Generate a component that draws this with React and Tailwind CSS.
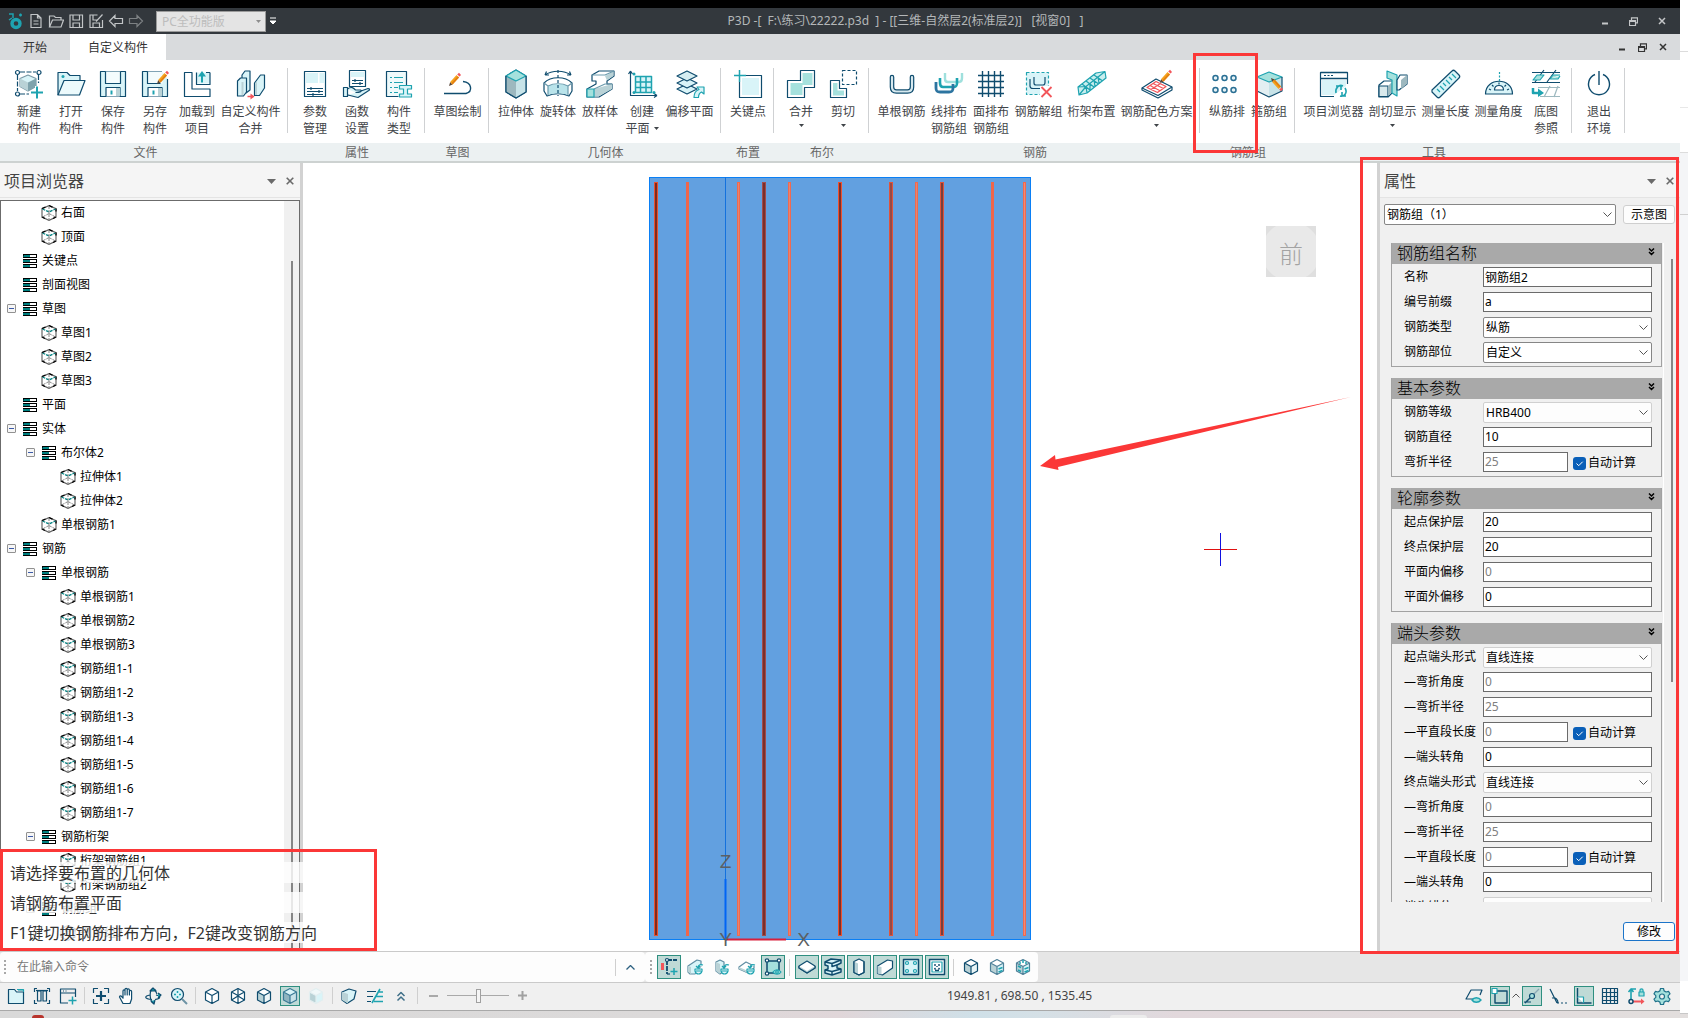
import React from "react";

const N = "#0f4c6e";
const T = "#1ea3b0";
const L = "#d9f4f8";
const M = "#a5e1dd";
const G = "#b9d2d6";

function Svg({ s = 32, children, className = "" }) {
  return (
    <svg
      width={s}
      height={s}
      viewBox={`0 0 ${s} ${s}`}
      fill="none"
      stroke={N}
      strokeWidth="1.2"
      strokeLinejoin="round"
      className={`shrink-0 ${className}`}
      aria-hidden="true"
    >
      {children}
    </svg>
  );
}

/* Pencil with its tip at x,y; points to lower left, or to upper left when flipped */
function Pencil({ x, y, flip = false }) {
  return (
    <g transform={`translate(${x} ${y})${flip ? " scale(1 -1)" : ""}`} stroke="none">
      <path d="M0 0 L1.2 -4 L3.6 -1.6z" fill="#5a4638" />
      <path d="M1.2 -4 L7.5 -11 L10 -8.6 L3.6 -1.6z" fill="#f6a21b" />
      <path d="M2.4 -2.8 L8.8 -9.8 L10 -8.6 L3.6 -1.6z" fill="#e27f12" />
      <path d="M8.2 -11.6 L10 -13.2 L12 -11 L10.6 -9.4z" fill="#f2555a" />
    </g>
  );
}

const ribbonIcons = {
  newPart: (
    <Svg>
      <path d="M4.5 7v16M7 4h16M25.5 7v8M7 26h9" strokeDasharray="5 1.5" />
      <circle cx="4.5" cy="4.5" r="2" fill="#fff" />
      <circle cx="26" cy="4.5" r="2" fill="#fff" />
      <circle cx="4.5" cy="26" r="2" fill="#fff" />
      <path d="M15 7l8 3.5v8L15 23l-8-4.500v-8z" fill={L} stroke="#7a99a6" />
      <path d="M15 14.500v8.500l-8-4.500v-8z" fill={G} stroke="none" />
      <path d="M15 14.500v8.500l8-4.500v-8z" fill="#7fa3ac" stroke="none" />
      <path d="M24 18v12M18 24h12" stroke="#fff" strokeWidth="4" />
      <path d="M24 18.500v12M18 24.500h12" stroke={T} strokeWidth="2" />
    </Svg>
  ),
  open: (
    <Svg>
      <path d="M3 27V4.500h9l3 3h10V13" fill={L} />
      <path d="M9 12.500h21L24.500 27H3z" fill="#ecfafc" />
      <circle cx="8" cy="8.500" r="1.500" fill={T} stroke="none" />
    </Svg>
  ),
  save: (
    <Svg>
      <path d="M3.500 3.500h25v25h-25z" fill={L} />
      <path d="M8.500 3.500v12h15v-12" fill="#f4fcfd" />
      <path d="M9 28.500v-9h14v9" fill="#fff" />
      <path d="M19 20h4v8h-4z" fill={G} stroke="none" />
      <path d="M14.500 22.500v4" stroke={T} strokeWidth="2" />
    </Svg>
  ),
  saveAs: (
    <Svg>
      <path d="M23 3.500H3.500v25h25V11" fill={L} />
      <path d="M8.500 3.500v12h15v-12" fill="#f4fcfd" stroke="none" />
      <path d="M8.500 3.500v12h13" />
      <path d="M9 28.500v-9h14v9" fill="#fff" />
      <path d="M19 20h4v8h-4z" fill={G} stroke="none" />
      <path d="M14.500 22.500v4" stroke={T} strokeWidth="2" />
      <Pencil x={18} y={16} />
    </Svg>
  ),
  load: (
    <Svg>
      <path d="M11 4.500H3.500v24h25.500V21h-18z" fill="#fff" />
      <path d="M21 4.500h-5.500v11h13.500V4.500" fill={L} stroke="none" />
      <path d="M15.500 4.500v12h13.500v-12M25 4.500h4" />
      <path d="M21 14.500V6" stroke={T} strokeWidth="2" />
      <path d="M17 8.500l4-5.500 4 5.500z" fill={T} stroke="none" />
    </Svg>
  ),
  merge: (
    <Svg>
      <path d="M7 7l3-4h5v19l-4 3-4-3z" fill={L} />
      <path d="M2.500 13l3-3h6v14l-3 4h-6z" fill={L} />
      <path d="M7.500 14v13" stroke={G} strokeWidth="2" />
      <path d="M19.500 15l6-8h4v13l-5 7.500h-5z" fill={L} />
      <path d="M20 27V15.500l2-2V27z" fill={G} stroke="none" />
      <path d="M12.500 28.500h6" stroke="#f2555a" strokeWidth="1.500" />
      <path d="M15.500 25.500l4 3-4 3z" fill="#f2555a" stroke="none" />
    </Svg>
  ),
  params: (
    <Svg>
      <rect x="5.500" y="3.500" width="21" height="25" fill="#fff" />
      <path d="M7 5h12v10H7zM20.500 5h5v10h-5z" fill={L} stroke="none" />
      <path d="M8 20.500h16M8 23.500h16M8 26.500h16M12 19v3M20 22v3M14 25v3" />
    </Svg>
  ),
  func: (
    <Svg>
      <rect x="8.500" y="2.500" width="16" height="16" fill="#fff" />
      <path d="M10 4h13v5H10z" fill={L} stroke="none" />
      <path d="M11 12.500h11M11 15.500h11M14 11v3M19 14v3" />
      <path d="M2.500 19.500h4v9h-4zM6.500 21c4-3 6-1 8 1h5c2 1 0 2.500-5 2.500M20 23l7-2.500c2 0 2 1.500 0 2.500l-10 6.500-10-2.500" fill={L} />
    </Svg>
  ),
  type: (
    <Svg>
      <path d="M15.500 28.500h-12v-25h20v14" fill="#eefafb" />
      <path d="M7 9.500h2M11 9.500h9M7 14.500h2M11 14.500h9M7 19.500h2M11 19.500h4M7 24.500h2M11 24.500h4" stroke={T} />
      <path d="M16.500 17.500h12v3.500h-4v5h4v3h-12v-3h4v-5h-4z" fill={L} stroke={T} />
    </Svg>
  ),
  sketch: (
    <Svg>
      <path d="M2 25.500h22c7-2 6-11-3-12" strokeWidth="1.400" />
      <Pencil x={7} y={18} />
    </Svg>
  ),
  extrude: (
    <Svg>
      <path d="M16 2l10 6v16l-10 6-10-6V8z" fill={L} />
      <path d="M16 13v17l-10-6V8z" fill="#9db8bf" stroke="none" />
      <path d="M16 13v17l10-6V8z" fill="#c7e3e8" stroke="none" />
      <path d="M16 2l10 6-10 5L6 8z" fill={M} stroke={T} />
      <path d="M6 8v16l10 6 10-6V8" />
    </Svg>
  ),
  revolve: (
    <Svg>
      <path d="M3 7c7-5 19-5 26 0M3 7l1.500-3.500M3 7l4 0M29 7l-1.500-3.500M29 7h-4" />
      <path d="M2 15c7-7 21-7 28 0v8l-3 5c-7-3-15-3-22 0l-3-5z" fill="#fff" />
      <path d="M6 18c6-3 14-3 20 0v9c-6-2-14-2-20 0z" fill="#b9e3ea" stroke="none" />
      <path d="M2 15l4 3v9.500M30 15l-4 3v9.500M6 18c6-3 14-3 20 0" stroke="#6c9bad" />
      <path d="M16 2v26" strokeDasharray="3 2" />
    </Svg>
  ),
  loft: (
    <Svg>
      <path d="M8 7l7-4h15v5l-7 5v3h5v5L15 29H3v-8l9-5v-3H8z" fill="#fff" />
      <path d="M21 8l8.500-4.500V8L23 12.500zM10 21l18-5v5L14.500 28.500H10z" fill={G} stroke="none" />
      <path d="M8 7h13l9-4M10 21l11-5h7" stroke="#6c9bad" />
      <rect x="3" y="21" width="7" height="8" fill={M} stroke={T} />
    </Svg>
  ),
  plane: (
    <Svg>
      <path d="M4.500 3v24.500H31M4.500 3l-2 3M4.500 3l2 3M31 27.500l-3-2M31 27.500l-3 2" />
      <rect x="9.500" y="8.500" width="16" height="16" fill={L} stroke={T} strokeWidth="1.500" />
      <path d="M14.500 8v16M20 8v16M9 14h16M9 19.500h16" stroke={T} strokeWidth="1.500" />
      <g fill={T} stroke="none">
        <circle cx="8" cy="6" r="1.500" />
        <circle cx="28" cy="24.500" r="1.500" />
        <circle cx="8" cy="24.500" r="1.500" />
      </g>
    </Svg>
  ),
  offset: (
    <Svg>
      <path d="M13 16l10 5-10 5-10-5z" fill={L} />
      <path d="M13 10l10 5-10 5-10-5z" fill={L} />
      <path d="M13 3l10 5-10 5-10-5z" fill="#d6eef2" />
      <path d="M20 29.500c0-4 2-7 5-8l-2-2.500h7v7l-2.500-2c-2 1-3 3-3 5.500z" fill={L} stroke={T} />
    </Svg>
  ),
  keypoint: (
    <Svg>
      <path d="M7.500 14v15.500h22v-22H13" />
      <path d="M10 10h17v17H10z" fill={L} stroke="none" />
      <path d="M7.500 2v12M2 7.500h12" stroke={T} strokeWidth="1.500" />
    </Svg>
  ),
  union: (
    <Svg>
      <path d="M15.500 2.500h14v17h-10v10h-17v-17h13z" />
      <path d="M17.500 5h10v12h-10v10h-12V15h12z" fill={M} stroke="none" />
    </Svg>
  ),
  subtract: (
    <Svg>
      <rect x="15.500" y="2.500" width="14" height="14" strokeDasharray="3 2" />
      <path d="M3.500 12.500h9v8h7v9h-16z" />
      <path d="M6 15h4.500v7.500H17v5H6z" fill={M} stroke="none" />
    </Svg>
  ),
  single: (
    <Svg>
      <path d="M6 9v10c0 3 1.500 4.500 4.500 4.500h11c3 0 4.500-1.500 4.500-4.500V9" stroke={N} strokeWidth="4.600" strokeLinecap="round" />
      <path d="M6 9v10c0 3 1.500 4.500 4.500 4.500h11c3 0 4.500-1.500 4.500-4.500V9" stroke="#d7e9ef" strokeWidth="2.200" strokeLinecap="round" />
    </Svg>
  ),
  lineRow: (
    <Svg>
      <path d="M12 5v6c0 2 1 3 3 3h11c2 0 3-1 3-4V5" stroke="#9fe0dd" strokeWidth="2.400" />
      <path d="M7 10v5c0 3 1 4 3 4h10c3 0 4-1 4-4v-5" stroke={T} strokeWidth="2.600" />
      <path d="M3 14v6c0 3 1 4 4 4h9c3 0 4-1 4-4v-4" stroke="#2c74a0" strokeWidth="2.800" />
    </Svg>
  ),
  gridRow: (
    <Svg>
      <path d="M7.500 3v26M13.500 3v26M19.500 3v26M25.500 3v26M3 7.500h26M3 13.500h26M3 19.500h26M3 25.500h26" strokeWidth="1.400" />
    </Svg>
  ),
  ungroup: (
    <Svg>
      <rect x="3.500" y="4.500" width="22" height="22" fill={L} stroke={T} strokeDasharray="3 2" />
      <path d="M7 11v7c0 2 1 2.500 3 2.500h8M11 9v6c0 1.500 1 2 2 2h7c2 0 2-1 2-2.500V9" />
      <path d="M17 18h13v12H17z" fill="#fff" stroke="none" />
      <path d="M18.500 19l10 10M28.500 19l-10 10" stroke="#f2555a" strokeWidth="1.800" />
    </Svg>
  ),
  truss: (
    <Svg>
      <path d="M2 19L19 5l10-1 1 6-17 14-9 3z" fill="#c8eeee" stroke="none" />
      <path d="M2 19L20 5l9-1.500 1 6.500-19 15-8 2zM2 19l8-.5L29 3.500M10 18.500l1 6.500M3 27l7-8.500M6 16l8 6M10 13l8 6M14 10l8 5.500M18 7l8 5.500M14 15.500l0 7M18 12l1 6.500M22 9l1 6" stroke={T} strokeWidth="1.200" />
    </Svg>
  ),
  color: (
    <Svg>
      <path d="M1 20l14-9 16 8v3L17 30 1 22z" fill="#fff" />
      <path d="M1 20l16 7.500L31 19" />
      <path d="M6 19.500l9-6 10 5-8.500 6zM9 17.500l10.500 5.500M12 15.500l10.500 5M10 21.500l9.500-6" stroke="#f2555a" />
      <Pencil x={19} y={15} />
    </Svg>
  ),
  dots: (
    <Svg>
      <g strokeWidth="1.500" stroke="#2a6f94" fill="#e6f3f6">
        <circle cx="4.500" cy="10" r="2.500" />
        <circle cx="13.500" cy="10" r="2.500" />
        <circle cx="22.500" cy="10" r="2.500" />
        <circle cx="4.500" cy="22" r="2.500" />
        <circle cx="13.500" cy="22" r="2.500" />
        <circle cx="22.500" cy="22" r="2.500" />
      </g>
    </Svg>
  ),
  stirrup: (
    <Svg>
      <path d="M4 9l12-5 13 5v14l-13 6-12-6z" fill="#e3eff2" stroke="none" />
      <path d="M16 14v15l13-6V9z" fill="#c7e3e8" stroke="none" />
      <path d="M4 9l12-5 13 5-13 5z" fill={M} stroke={T} />
      <path d="M4 23l12 6 13-6V9" stroke={N} />
      <Pencil x={18} y={10} flip />
    </Svg>
  ),
  browser: (
    <Svg>
      <path d="M16 28.500H2.500v-24h27V16" fill="#fff" />
      <path d="M4 12h24v6l-12 9H4z" fill={L} stroke="none" />
      <path d="M2.500 10.500h27M2.500 4.500h27" strokeWidth="1.500" />
      <path d="M6 7.500h2M9.500 7.500h2M13 7.500h2" />
      <path d="M18 25c-1-5 3-9 7-7M27 20c3 5-1 9-5 8M18 18h5v4M28 28h-4v-4" stroke={T} strokeWidth="1.600" />
    </Svg>
  ),
  section: (
    <Svg>
      <path d="M2 17l5-4h9v11l-5 5H2z" fill="#fff" />
      <path d="M2 18h9v10.500H2z" fill="#d9e9ec" />
      <path d="M11 18l4-4v10l-4 4z" fill="#9db8bf" stroke="none" />
      <path d="M10 3l10 4v21l-5-3V12l-5-2z" fill={M} stroke={T} />
      <path d="M20 12l3-5h7v9l-8 6h-2z" fill="#fff" />
      <path d="M24 12l6-5v9l-6 5z" fill="#9db8bf" stroke="none" />
    </Svg>
  ),
  ruler: (
    <Svg>
      <path d="M2 22L22 3c1-1 2-1 3 0l4 4c1 1 1 2 0 3L10 29c-1 1-2 1-3 0l-5-5z" fill={L} />
      <path d="M7 21l3 3M10 18l4 4M13 15l3 3M16 12l4 4M19 9l3 3M22 6l4 4" stroke={T} />
    </Svg>
  ),
  angle: (
    <Svg>
      <path d="M2.500 26c0-17 27-17 27 0z" fill={L} />
      <path d="M11.500 22c0-6 9-6 9 0z" fill="#fff" />
      <path d="M6 21l2 1M9 17l1.500 1.500M16 14.500v2M26 21l-2 1M23 17l-1.500 1.500" />
      <path d="M16.500 4v9" stroke={T} strokeDasharray="2 1.500" />
    </Svg>
  ),
  base: (
    <Svg>
      <path d="M2 4.500h28M2 14.500h28M14 2L5 14M26 2l-9 12" />
      <path d="M3 12l4-5h7l-4 5zM20 11l3-4h7M20 11h8l2-3" fill={M} stroke={T} />
      <path d="M8 19.500h22M10 28.500h20M20 18l-6 11M28 18l-4 11" stroke="#9db8bf" />
      <path d="M3 20v5h6" stroke={T} strokeWidth="2.500" />
      <path d="M8 20.500l6 4.500-6 4z" fill={T} stroke="none" />
    </Svg>
  ),
  exit: (
    <Svg>
      <path d="M12 6.500a10.500 10.500 0 1 0 8 0M16 3v14" strokeWidth="1.400" />
    </Svg>
  ),
};

const W42 = "w-[42px]";
const W53 = "w-[53px]";
const W65 = "w-[65px]";
const W77 = "w-[77px]";

const ribbon = [
  { label: "文件", items: [["newPart", ["新建", "构件"], W42], ["open", ["打开", "构件"], W42], ["save", ["保存", "构件"], W42], ["saveAs", ["另存", "构件"], W42], ["load", ["加载到", "项目"], W42], ["merge", ["自定义构件", "合并"], W65]] },
  { label: "属性", items: [["params", ["参数", "管理"], W42], ["func", ["函数", "设置"], W42], ["type", ["构件", "类型"], W42]] },
  { label: "草图", items: [["sketch", ["草图绘制"], W53]] },
  { label: "几何体", items: [["extrude", ["拉伸体"], W42], ["revolve", ["旋转体"], W42], ["loft", ["放样体"], W42], ["plane", ["创建", "平面"], W42, "inline"], ["offset", ["偏移平面"], W53]] },
  { label: "布置", items: [["keypoint", ["关键点"], W42]] },
  { label: "布尔", items: [["union", ["合并"], W42, "below"], ["subtract", ["剪切"], W42, "below"]] },
  { label: "钢筋", items: [["single", ["单根钢筋"], W53], ["lineRow", ["线排布", "钢筋组"], W42], ["gridRow", ["面排布", "钢筋组"], W42], ["ungroup", ["钢筋解组"], W53], ["truss", ["桁架布置"], W53], ["color", ["钢筋配色方案"], W77, "below"]] },
  { label: "钢筋组", items: [["dots", ["纵筋排"], W42, "", true], ["stirrup", ["箍筋组"], W42]] },
  { label: "工具", items: [["browser", ["项目浏览器"], W65], ["section", ["剖切显示"], W53, "below"], ["ruler", ["测量长度"], W53], ["angle", ["测量角度"], W53], ["base", ["底图", "参照"], W42]] },
  { label: "", items: [["exit", ["退出", "环境"], W42]] },
];

function Caret({ className = "" }) {
  return (
    <svg width="5" height="3" viewBox="0 0 5 3" className={`shrink-0 ${className}`} aria-hidden="true">
      <path d="M0 0h5L2.500 3z" fill="currentColor" />
    </svg>
  );
}

function RibbonItem({ item }) {
  const [icon, lines, width, arrow, marked] = item;
  return (
    <div className={`relative shrink-0 ${width}`}>
      <button type="button" className="flex w-full flex-col items-center whitespace-nowrap text-xs leading-[17px] text-[#3f4448]">
        {ribbonIcons[icon]}
        <span className="mt-[3px]">{lines[0]}</span>
        {lines[1] && (
          <span className="flex items-center gap-1">
            {lines[1]}
            {arrow === "inline" && <Caret />}
          </span>
        )}
        {arrow === "below" && <Caret className="mt-1" />}
      </button>
      {marked && <div className="pointer-events-none absolute -top-[15px] -left-[13px] z-20 h-[100px] w-[65px] border-[3px] border-[#fb3737]" />}
    </div>
  );
}

function Ribbon() {
  return (
    <div className="flex shrink-0 border-b-2 border-[#cdd2d1] bg-[linear-gradient(#fff_83px,#ecf1f2_83px)] pl-2">
      {ribbon.map((g, i) => (
        <div key={i} className="flex shrink-0">
          <div>
            <div className="flex h-[83px] pt-2">
              {g.items.map((it) => (
                <RibbonItem key={it[0]} item={it} />
              ))}
            </div>
            <div className="h-[18px] text-center text-xs leading-5 text-[#666]">{g.label}</div>
          </div>
          <div className="mt-2 mr-[6px] ml-1 h-[65px] w-px bg-[#cfd1d3]" />
        </div>
      ))}
    </div>
  );
}

function WindowButtons({ gap, color }) {
  return (
    <div className={`flex items-center ${gap} ${color}`}>
      <button type="button" aria-label="最小化" className="flex h-4 w-2 items-center justify-center">
        <svg width="8" height="10" viewBox="0 0 8 10"><path d="M1 7.500h6" stroke="currentColor" strokeWidth="2" /></svg>
      </button>
      <button type="button" aria-label="还原" className="flex h-4 w-[9px] items-center justify-center">
        <svg width="9" height="9" viewBox="0 0 9 9" fill="none" stroke="currentColor">
          <path d="M2.500 3V.8h6v5H6.500M.5 3.500h6v5h-6zM.5 4.500h6" strokeWidth="1.200" />
        </svg>
      </button>
      <button type="button" aria-label="关闭" className="flex h-4 w-2 items-center justify-center">
        <svg width="8" height="8" viewBox="0 0 8 8"><path d="M1 1l6 6M7 1L1 7" stroke="currentColor" strokeWidth="1.500" /></svg>
      </button>
    </div>
  );
}

function TitleBar() {
  const quick = [
    ["新建", "M3 1.500h6.500l3.500 3.500v9.500H3zM9.500 1.500v3.500h3.500M5.500 8h5M5.500 11h5"],
    ["打开", "M1.500 14V3h4.500l1.500 1.500h5.500V7M4.500 7h11l-2.500 7H1.500z"],
    ["保存", "M2 2h12.500v12.500H2zM5 2v5h6.500V2M5 14.500v-4.500h6.500v4.500"],
    ["另存", "M9.500 2H2v12.500h12.500V7M5 2v5h4M5 14.500v-4.500h6.500v4.500M8 8.500l6.500-7"],
    ["撤销", "M7 2.500L1.500 8 7 13.500V10.500h7.500v-5H7z"],
  ];
  return (
    <header className="relative flex h-[26px] shrink-0 items-center bg-[#33383d] pl-2">
      <svg width="16" height="18" viewBox="0 0 16 18" fill="none" className="mr-1" aria-hidden="true">
        <circle cx="8" cy="11.500" r="4" stroke={T} strokeWidth="3.400" />
        <path d="M1 2h4v4M4 6l-3 2M11 3h3M12.500 1.500v3" stroke={T} strokeWidth="1.500" />
      </svg>
      <div className="flex gap-1">
        {quick.map(([n, d]) => (
          <button key={n} type="button" aria-label={n} className="h-4 w-4 text-[#c2c5c7]">
            <svg width="16" height="16" viewBox="0 0 16 16" fill="none" stroke="currentColor" strokeWidth="1.200"><path d={d} /></svg>
          </button>
        ))}
        <button type="button" aria-label="重做" className="h-4 w-4 text-[#7d8184]">
          <svg width="16" height="16" viewBox="0 0 16 16" fill="none" stroke="currentColor" strokeWidth="1.200"><path d="M9 2.500L14.500 8 9 13.500V10.500H1.500v-5H9z" /></svg>
        </button>
      </div>
      <div className="relative ml-3 text-[#8d8d8d]">
        <select aria-label="版本" className="block h-[21px] w-[110px] appearance-none border border-[#9b9b9b] bg-[#e4e4e4] pl-[5px] text-xs leading-[19px] text-[#bdbdbd]">
          <option>PC全功能版</option>
        </select>
        <Caret className="pointer-events-none absolute top-[9px] right-[5px]" />
      </div>
      <button type="button" aria-label="自定义快速访问" className="ml-1 text-white">
        <svg width="6" height="8" viewBox="0 0 6 8"><path d="M0 1h6M0 4h6L3 7z" stroke="currentColor" fill="currentColor" strokeWidth="1" /></svg>
      </button>
      <div className="pointer-events-none absolute inset-x-0 left-[131px] text-center text-xs whitespace-pre text-[#b4b7b9]">
        {"P3D -[  F:\\练习\\22222.p3d  ] - [[三维-自然层2(标准层2)]   [视窗0]   ]"}
      </div>
      <div className="ml-auto pr-[14px]">
        <WindowButtons gap="gap-5" color="text-[#c4c6c8]" />
      </div>
    </header>
  );
}

function Tabs() {
  return (
    <nav className="flex h-[26px] shrink-0 items-center bg-[#d9dbdd] text-xs text-[#333]">
      <button type="button" className="h-full w-[70px] pt-px">开始</button>
      <button type="button" className="h-full w-24 bg-white pt-px">自定义构件</button>
      <div className="ml-auto pr-[13px]">
        <WindowButtons gap="gap-3" color="text-[#333]" />
      </div>
    </nav>
  );
}

/* level, kind (l list, c cube), label, expandable */
const tree = [
  [1, "c", "右面"], [1, "c", "顶面"], [0, "l", "关键点"], [0, "l", "剖面视图"], [0, "l", "草图", 1],
  [1, "c", "草图1"], [1, "c", "草图2"], [1, "c", "草图3"], [0, "l", "平面"], [0, "l", "实体", 1],
  [1, "l", "布尔体2", 1], [2, "c", "拉伸体1"], [2, "c", "拉伸体2"], [1, "c", "单根钢筋1"], [0, "l", "钢筋", 1],
  [1, "l", "单根钢筋", 1], [2, "c", "单根钢筋1"], [2, "c", "单根钢筋2"], [2, "c", "单根钢筋3"],
  [2, "c", "钢筋组1-1"], [2, "c", "钢筋组1-2"], [2, "c", "钢筋组1-3"], [2, "c", "钢筋组1-4"], [2, "c", "钢筋组1-5"],
  [2, "c", "钢筋组1-6"], [2, "c", "钢筋组1-7"], [1, "l", "钢筋桁架", 1], [2, "c", "桁架钢筋组1"], [2, "c", "桁架钢筋组2"],
  [1, "l", "钢筋组", 1], [2, "c", "钢筋组2"],
];
const treePad = ["pl-[6px]", "pl-[25px]", "pl-[44px]"];

function TreeIcon({ kind }) {
  return kind === "l" ? (
    <svg width="16" height="16" viewBox="0 0 16 16" className="shrink-0" aria-hidden="true">
      <path d="M1 1h14v4H1zM1 6h14v4H1zM1 11h14v4H1z" fill="#000" />
      <path d="M2 2h6v2H1zM1 7h7v2H1zM1 12h7v2H1z" fill="#008080" />
      <path d="M8 2h6v2H8zM8 7h6v2H8zM8 12h6v2H8z" fill="#fff" />
    </svg>
  ) : (
    <svg width="16" height="16" viewBox="0 0 16 16" fill="none" className="shrink-0" aria-hidden="true">
      <path d="M8 .6l7 3v8.500l-7 3.300-7-3.300V3.600z" stroke="#666" strokeWidth="1.200" />
      <path d="M8 .6l3.500 1.500M15 3.600v3M12 13.500l3-1.500M4 13.500L1 12M1 3.600L4.500 2" stroke="#000" strokeWidth="1.300" />
      <path d="M1.500 4L8 7l6.500-3" stroke="#008080" strokeWidth="1.300" strokeDasharray="3 1" />
      <path d="M8 1v14M8 8.500l-6.500 3.500M8 8.500l6.500 3.500" stroke="#888" strokeDasharray="3 1" />
    </svg>
  );
}

function PanelHead({ title }) {
  return (
    <div className="flex h-[35px] shrink-0 items-center border-b border-[#e4e4e4] bg-[#f5f5f5] pt-[2px] pr-[5px] pl-1 text-[#6a6a6a]">
      <h2 className="text-base text-[#444]">{title}</h2>
      <button type="button" aria-label="菜单" className="ml-auto p-1">
        <svg width="9" height="5" viewBox="0 0 9 5"><path d="M0 0h9L4.500 5z" fill="currentColor" /></svg>
      </button>
      <button type="button" aria-label="关闭面板" className="ml-[5px] p-px">
        <svg width="8" height="8" viewBox="0 0 8 8"><path d="M.7.7l6.600 6.600M7.300.7L.7 7.300" stroke="currentColor" strokeWidth="1.600" /></svg>
      </button>
    </div>
  );
}

function LeftPanel() {
  return (
    <aside className="flex w-[303px] shrink-0 flex-col border-r-[3px] border-[#d2d2d2] bg-[#f5f5f5]">
      <PanelHead title="项目浏览器" />
      <div className="mt-[2px] flex min-h-0 flex-1 overflow-hidden border border-b-0 border-[#6b6b6b] bg-white">
        <ul className="flex-1 overflow-hidden text-xs leading-[22px] text-black">
          {tree.map(([lv, kind, label, exp], i) => (
            <li key={i} className={`flex h-6 items-center pb-px ${treePad[lv]}`}>
              {exp ? (
                <button type="button" aria-label="折叠" className="flex h-[9px] w-[9px] items-center justify-center rounded-[1px] border border-[#919191] bg-[#f6f6f6]">
                  <span className="h-px w-[5px] bg-[#3c5aa8]" />
                </button>
              ) : kind === "l" ? (
                <span className="w-[9px]" />
              ) : null}
              <span className={kind === "l" ? "mr-1 ml-[6px]" : "mr-1 ml-[15px]"}>
                <TreeIcon kind={kind} />
              </span>
              {label}
            </li>
          ))}
        </ul>
        <div className="flex w-[15px] flex-col items-center bg-[#f0f0f0] pt-[60px]">
          <div className="w-[2px] flex-1 bg-[#858585]" />
        </div>
      </div>
    </aside>
  );
}

/* Rebar strokes: x, width, edge colour, core colour */
const bars = [
  [351, 4, "#e8502f", "#7e2a1e"], [383, 3, "#f0664a", "#f0664a"], [434, 3, "#ef6a50", "#e8836f"], [459, 4, "#a34a4a", "#7a2f2c"],
  [485, 3, "#ef6a50", "#e8836f"], [535, 4, "#f0502c", "#7a2f2c"], [586, 4, "#e0533a", "#964a48"], [612, 3, "#ef6a50", "#e8836f"],
  [637, 4, "#e0533a", "#7a3f3c"], [688, 3, "#f0664a", "#f0664a"], [720, 3, "#ef6a50", "#f28a74"],
];

function Viewport() {
  return (
    <main className="relative min-w-0 flex-1 overflow-hidden bg-white">
      <svg className="absolute inset-0 h-full w-full" viewBox="0 0 1074 788" preserveAspectRatio="xMidYMid meet" aria-label="模型视图">
        <rect x="346.500" y="14.500" width="381" height="762" fill="#62a0e0" stroke="#0a7ff5" />
        <path d="M422.500 14v702" stroke="#1471dd" />
        {bars.map(([x, w, edge, core]) => (
          <g key={x}>
            <rect x={x} y="19" width={w} height="754" fill={edge} />
            <rect x={x + 1} y="20" width={w - 2} height="752" fill={core} />
          </g>
        ))}
        <path d="M422.500 716v61" stroke="#0064f5" strokeWidth="2" />
        <path d="M423 776.500h60" stroke="#d8203c" strokeWidth="2" />
        <g fill="#5c5f63" fontFamily="Liberation Sans, sans-serif" fontSize="19" textAnchor="middle">
          <text x="422.500" y="705">Z</text>
          <text x="422.500" y="783">Y</text>
          <text x="500.500" y="783">X</text>
        </g>
        <path d="M901 386.500h33" stroke="#e01010" />
        <path d="M917.500 370v33" stroke="#1010e0" />
        <path d="M737 303l15-11 .500 4.500L1048 234 755 304l.500 3z" fill="#fb3737" />
      </svg>
      <button type="button" className="absolute top-[63px] right-[61px] h-[51px] w-[50px] bg-[radial-gradient(circle,#e9e9e9_29px,#dfdfdf_30px)] pt-1 text-2xl font-light text-[#a3a3a3]">前</button>
    </main>
  );
}

function Chevron({ className = "" }) {
  return (
    <svg width="9" height="5" viewBox="0 0 9 5" fill="none" stroke="#555" className={className} aria-hidden="true">
      <path d="M.5.500l4 4 4-4" />
    </svg>
  );
}

function Choice({ id, label, value, light, className = "w-full" }) {
  return (
    <div className={`relative ${className}`}>
      <select
        id={id}
        aria-label={label}
        className={`block h-[21px] w-full appearance-none rounded-[2px] border pl-[2px] text-xs leading-[19px] text-black ${light ? "border-[#d0d0d0] bg-[#fdfdfd]" : "border-[#868686] bg-white"}`}
      >
        <option>{value}</option>
      </select>
      <Chevron className="pointer-events-none absolute top-2 right-1" />
    </div>
  );
}

/* type: i input, d disabled input, a disabled input with auto tick box, s select, g light select */
const groups = [
  ["钢筋组名称", [["名称", "i", "钢筋组2"], ["编号前缀", "i", "a"], ["钢筋类型", "s", "纵筋"], ["钢筋部位", "s", "自定义"]]],
  ["基本参数", [["钢筋等级", "g", "HRB400"], ["钢筋直径", "i", "10"], ["弯折半径", "a", "25"]]],
  ["轮廓参数", [["起点保护层", "i", "20"], ["终点保护层", "i", "20"], ["平面内偏移", "d", "0"], ["平面外偏移", "i", "0"]]],
  ["端头参数", [
    ["起点端头形式", "g", "直线连接"], ["—弯折角度", "d", "0"], ["—弯折半径", "d", "25"], ["—平直段长度", "a", "0"], ["—端头转角", "i", "0"],
    ["终点端头形式", "g", "直线连接"], ["—弯折角度", "d", "0"], ["—弯折半径", "d", "25"], ["—平直段长度", "a", "0"], ["—端头转角", "i", "0"],
    ["端头错位", "g", ""],
  ]],
];

function Field({ id, row }) {
  const [label, type, value] = row;
  const box = "h-5 min-w-0 border border-[#6b6b6b] bg-white pb-px pl-px text-xs leading-[17px]";
  return (
    <div className="flex h-[25px] items-start pr-[9px] pl-3 text-xs">
      <label htmlFor={id} className="w-[79px] shrink-0 leading-[19px] whitespace-nowrap text-black">{label}</label>
      {(type === "s" || type === "g") && <Choice id={id} value={value} light={type === "g"} />}
      {(type === "i" || type === "d") && (
        <input id={id} defaultValue={value} readOnly={type === "d"} className={`${box} w-full ${type === "d" ? "text-[#808080]" : "text-black"}`} />
      )}
      {type === "a" && (
        <>
          <input id={id} defaultValue={value} readOnly className={`${box} flex-1 text-[#808080]`} />
          <label className="ml-[5px] flex h-[22px] w-[79px] items-center gap-[2px] whitespace-nowrap text-black">
            <span className="grid">
              <input type="checkbox" defaultChecked className="col-start-1 row-start-1 h-[13px] w-[13px] appearance-none rounded-[3px] bg-[#0a5fb8]" />
              <svg width="13" height="13" viewBox="0 0 13 13" className="pointer-events-none col-start-1 row-start-1" fill="none" stroke="#fff">
                <path d="M3.500 6.500l2.200 2.200 4-4" />
              </svg>
            </span>
            自动计算
          </label>
        </>
      )}
    </div>
  );
}

function RightPanel() {
  return (
    <aside className="flex w-[303px] shrink-0 flex-col border-l-[3px] border-[#d2d2d2] bg-[#f0f0f0]">
      <PanelHead title="属性" />
      <div className="mt-[6px] flex shrink-0 items-center gap-[7px] pr-[5px] pl-1">
        <Choice label="构件" value="钢筋组（1）" className="flex-1" />
        <button type="button" className="h-[19px] w-[52px] rounded-[3px] border border-[#cfcfcf] bg-[#fdfdfd] text-xs leading-[17px] text-black">示意图</button>
      </div>
      <div className="mt-[18px] flex min-h-0 flex-1 pl-[11px]">
        <div className="min-w-0 flex-1 overflow-hidden border-r border-white pr-px">
          {groups.map(([title, rows], gi) => (
            <section key={title} className="mb-[11px] border-r border-b border-l border-[#a2a2a2]">
              <h3 className="mb-[3px] flex h-[21px] items-center justify-between bg-[#a9a9a9] pr-[6px] pl-[5px] text-base leading-[21px] font-light text-black">
                {title}
                <svg width="7" height="8" viewBox="0 0 7 8" fill="none" stroke="#000" strokeWidth="1.500" className="-mt-1" aria-hidden="true">
                  <path d="M1 .5l2.500 2.500L6 .5M1 4l2.500 2.500L6 4" />
                </svg>
              </h3>
              <div className="-mb-px">
                {rows.map((r, i) => (
                  <Field key={i} id={`f${gi}-${i}`} row={r} />
                ))}
              </div>
            </section>
          ))}
        </div>
        <div className="w-4 shrink-0 pt-4 pl-[7px]">
          <div className="h-[423px] w-[2px] bg-[#858585]" />
        </div>
      </div>
      <div className="flex h-[49px] shrink-0 items-end justify-end pr-[5px] pb-[10px]">
        <button type="button" className="h-[19px] w-[52px] rounded-[3px] border border-[#1b74c9] bg-[#fdfdfd] text-xs leading-[17px] text-black">修改</button>
      </div>
    </aside>
  );
}

function Messages() {
  return (
    <div className="pointer-events-none absolute bottom-0 left-0 z-10 flex h-[102px] w-[377px] flex-col gap-[9px] border-[3px] border-[#fb3737] pt-[10px] text-base leading-[23px] whitespace-nowrap text-[#333]">
      <p className="h-[21px] bg-white/80 pl-[7px]">请选择要布置的几何体</p>
      <p className="h-[21px] bg-white/80 pl-[7px]">请钢筋布置平面</p>
      <p className="h-[21px] bg-white/80 pl-[7px]">F1键切换钢筋排布方向，F2键改变钢筋方向</p>
    </div>
  );
}

/* ---- small 20px toolbar glyphs ---- */
const cube = "M10 2.500l6.500 3.500v8L10 17.500 3.500 14V6z";
function Cube({ left = "#fff", right = "#fff", top = "#fff", stroke = N, extra }) {
  return (
    <Svg s={20}>
      <path d="M3.500 6L10 9.500v8L3.500 14z" fill={left} stroke="none" />
      <path d="M16.500 6L10 9.500v8l6.500-3.500z" fill={right} stroke="none" />
      <path d="M10 2.500L16.500 6 10 9.500 3.500 6z" fill={top} stroke="none" />
      <path d={`${cube}M3.500 6L10 9.500 16.500 6M10 9.500v8`} stroke={stroke} />
      {extra}
    </Svg>
  );
}
const rot = <path d="M10 12h7v2c-1 4-6 4-7 0zM11 14h5M13 11c0-3 2-4 5-3M13 11l-2-2M13 11l2-2" stroke={T} fill={L} />;

const midBar = [
  ["点位", true, <Svg s={20}><path d="M2 6h3v7H2z" fill="#f2555a" stroke="none" /><path d="M8 3v14M8 3h10" strokeWidth="1.800" strokeDasharray="5 1" /><circle cx="8" cy="3" r="1.500" fill="#fff" /><path d="M8 17h3" /><path d="M15 11v7M11.500 14.500h7" stroke={T} strokeWidth="1.500" /></Svg>],
  ["拉伸旋转", false, <Svg s={20}><path d="M3 9l9-6 4 1v5l-6 8H5l-2-2z" fill={L} stroke="#5f8ea3" /><path d="M3 9l3 1v7l-3-2z" fill={G} stroke="none" />{rot}</Svg>],
  ["柱旋转", false, <Svg s={20}><path d="M5 5l4-2 4 2v9l-4 3-4-3z" fill={L} stroke="#5f8ea3" /><path d="M5 5l4 2v10l-4-3z" fill={G} stroke="none" />{rot}</Svg>],
  ["板旋转", false, <Svg s={20}><path d="M2 10l7-5 8 4v2l-6 5-9-4z" fill="#fff" stroke="#5f8ea3" /><path d="M2 10l9 4v2l-9-4z" fill={G} stroke="none" />{rot}</Svg>],
  ["框选", true, <Svg s={20}><path d="M4 4h12v12H4z" fill={M} strokeWidth="1.500" /><g fill="#fff"><circle cx="4" cy="3.500" r="1.700" /><circle cx="16" cy="3.500" r="1.700" /><circle cx="4" cy="16.500" r="1.700" /></g><path d="M10 15c2-3 6-3 8 0-2 3-6 3-8 0z" fill={M} stroke={T} /><circle cx="14" cy="15" r="1.300" stroke={T} /></Svg>],
  null,
  ["板", true, <Svg s={20}><path d="M2 9L10 4l8 5v2l-8 5-8-5z" fill="#fff" /><path d="M2 9l8 5 8-5v2l-8 5-8-5z" fill={G} stroke="none" /><path d="M2 9v2l8 5 8-5V9" /></Svg>],
  ["梁", true, <Svg s={20}><path d="M2 5l6-3 10 1v3l-4 2v3l4 1v3l-9 3-7-2v-3l3-1V9L2 8z" fill={L} strokeWidth="1.500" /><path d="M2 5l7 1.500 9-3.500M9 6.500v3l5-1.500M2 13l7 1.500 9-2.500M9 15v3" strokeWidth="1.500" /></Svg>],
  ["柱", true, <Svg s={20}><path d="M5 4.500L10 2l5 2.500v11L10 18l-5-2.500z" fill="#fff" /><path d="M5 4.500l4 2V17.500l-4-2z" fill={G} stroke="none" /><path d="M5 4.500v11L10 18l5-2.500v-11" /></Svg>],
  ["墙", true, <Svg s={20}><path d="M2.500 9l10-6 5 1v7l-10 7-5-1.500z" fill="#fff" /><path d="M2.500 9l4 1v7.500l-4-1z" fill={G} stroke="none" /></Svg>],
  ["孔位", true, <Svg s={20}><path d="M2.500 2.500h15v15h-15z" fill={L} strokeWidth="1.500" /><g stroke={T}><circle cx="6" cy="6" r="1.500" /><circle cx="14" cy="6" r="1.500" /><circle cx="6" cy="14" r="1.500" /><circle cx="14" cy="14" r="1.500" /></g></Svg>],
  ["预埋", true, <Svg s={20}><path d="M2.500 2.500h15v15h-15z" fill="#fff" strokeWidth="1.500" /><path d="M5 5h10v10H5z" stroke={T} /><path d="M8 7v2M12 7v2M10 9v1M7.500 11l1 1.500M12.500 11l-1 1.500M8 13.500h4" strokeWidth="1.400" /></Svg>],
  null,
  ["线框", false, <Cube left={G} right="#e8f4f6" />],
  ["着色", false, <Cube left={G} right={L} stroke="#4f8199" extra={<path d="M11.500 12l4-1.500M11.500 15l4-1.500" stroke={T} strokeWidth="1.500" />} />],
  ["混合", false, <Cube left={G} right={L} stroke="#4f8199" extra={<path d="M11.500 12l4-1.500M11.500 15l4-1.500M5 9l3 1.500M5 13l3 1.500M10 3v3M7 5v2M13 5v2" stroke={T} strokeWidth="1.500" />} />],
];

function ToolButton({ name, active, size = "h-6 w-6", children }) {
  return (
    <button
      type="button"
      aria-label={name}
      className={`flex shrink-0 items-center justify-center ${size} ${active ? "border border-[#2f8f80] bg-[#bfdad6]" : ""}`}
    >
      {children}
    </button>
  );
}

function Grip() {
  return <div className="h-[15px] w-[2px] bg-[repeating-linear-gradient(#a8a8a8_0_2px,transparent_2px_4px)]" />;
}

function CommandBar() {
  return (
    <div className="flex h-[32px] shrink-0 border-t border-b border-[#cacaca] bg-[#e6e6e6]">
      <div className="flex w-[645px] items-center rounded bg-[#fdfdfd] pl-1">
        <Grip />
        <input aria-label="命令" placeholder="在此输入命令" className="ml-[11px] min-w-0 flex-1 bg-transparent text-xs text-black placeholder:text-[#777]" />
        <div className="h-[17px] w-px bg-[#cfcfcf]" />
        <button type="button" aria-label="展开" className="flex w-[29px] justify-center">
          <svg width="9" height="5" viewBox="0 0 9 5" fill="none" stroke="#2c6080" strokeWidth="1.300"><path d="M.5 4.500l4-4 4 4" /></svg>
        </button>
      </div>
      <div className="flex items-center rounded bg-[#fdfdfd] pr-[3px] pl-[5px]">
        <Grip />
        <div className="ml-[5px] flex items-center gap-[2px]">
          {midBar.map((b, i) =>
            b ? (
              <ToolButton key={i} name={b[0]} active={b[1]}>{b[2]}</ToolButton>
            ) : (
              <div key={i} className="mx-[2px] h-[17px] w-[2px] border-l border-[#cfcfcf]" />
            )
          )}
        </div>
      </div>
    </div>
  );
}

const statusLeft = [
  ["文件夹", <Svg s={20}><path d="M2.500 3.500h6l2 2.500h7v11.500h-15z" fill={L} /><path d="M11 3.500h6.500V6" stroke={T} /><path d="M12 4h5" stroke={T} /></Svg>],
  ["并列", <Svg s={20}><path d="M5 2.500H2.500V6M15 2.500h2.500V6M5 17.500H2.500V14M15 17.500h2.500V14M5.500 5h3.500v10H5.500zM11 5h3.500v10H11z" /><path d="M4 4.500h12" /></Svg>],
  ["新窗口", <Svg s={20}><path d="M10 17H2.500V3h15v8M2.500 7h15" /><path d="M5 5h1M7.500 5h1" /><path d="M14.500 10.500v8M10.500 14.500h8" stroke={T} strokeWidth="1.500" /></Svg>],
  null,
  ["缩放全图", <Svg s={20}><path d="M7 2.500H2.500V7M13 2.500h4.500V7M7 17.500H2.500V13M13 17.500h4.500V13" /><path d="M10 5v10M5 10h10" stroke={N} strokeWidth="2.200" /></Svg>],
  ["平移", <Svg s={20}><path d="M6 17.500L2.500 11c0-1.500 1.500-1.500 2.500 0l1 1.200V5c0-1.500 2-1.500 2 0v4-5.500c0-1.500 2.200-1.500 2.200 0V9 4c0-1.500 2.200-1.500 2.200 0v5-3.500c0-1.500 2.200-1.500 2.200 0V13l-1.600 4.500z" fill="#fff" /></Svg>],
  ["旋转", <Svg s={20}><path d="M7 9c-6 1-6 4 2 4.500M13 9c6 1 4 4-1 4.500M9 3c-3 3-2 12 1 14M11.500 3l2.500 5" /><path d="M7 5l3-3 3 3zM8 15l3 3 1-4M15 7l3 2-3 3" fill={T} stroke={N} /></Svg>],
  ["放大", <Svg s={20}><circle cx="8.500" cy="8.500" r="6" fill={L} /><path d="M13 13l5 5" strokeWidth="2" stroke="#6d93a5" /><path d="M8.500 5v2M8.500 10v2M5 8.500h2M10 8.500h2" stroke={T} strokeWidth="1.500" /></Svg>],
  null,
  ["线框", <Cube />],
  ["透明", <Cube extra={<path d="M3.500 14L10 10l6.500 4M10 2.500V10" />} />],
  ["消隐", <Cube left={G} right="#eef6f8" />],
  ["着色", <Cube left="#8fb5c0" right="#c8e2e8" top="#d9f4f8" stroke="#3a7a96" />, true],
  ["真实", <Cube left={G} right={L} top="#f0f8f9" stroke="#e2eef0" />],
  null,
  ["剖切", <Svg s={20}><path d="M3 6l7-3 7 2-2 8-7 4.500L3 14z" fill={L} /><path d="M3 6l6 2v9.500L3 14z" fill={G} stroke="none" /></Svg>],
  ["图层", <Svg s={20}><path d="M2 5.500h9M2 10.500h6M2 15.500h4" /><path d="M7 17L15 3M11 10.500h7M9 15.500h9M14 6h4" stroke={T} strokeWidth="1.600" /></Svg>],
  ["更多", <Svg s={20}><path d="M6.500 10L10 6.500l3.500 3.500M6.500 14.500L10 11l3.500 3.500" stroke="#3f6f88" strokeWidth="1.500" /></Svg>],
  null,
];

const statusRight = [
  ["平面显示", false, <Svg s={20}><path d="M9 13H2l5-9h11l-2 5" /><path d="M8 14c2-3 6.500-3 9 0-2.500 3-7 3-9 0z" fill={M} stroke={T} strokeWidth="1.500" /></Svg>],
  ["捕捉", true, <Svg s={20}><path d="M6 5h11v12H5V8" strokeWidth="1.400" /><path d="M2 2.500h5v5H2z" fill="#fff" stroke={T} /></Svg>],
  "chev",
  ["对象捕捉", true, <Svg s={20}><path d="M3 17L17 3" stroke="#8aa9b5" /><path d="M2 16h7M3 17l7-7" /><circle cx="10" cy="10" r="2.500" fill={M} /></Svg>],
  ["极轴", false, <Svg s={20}><path d="M2 3l7 14M4 12c4-1 6 2 6 5" /><path d="M9 17h10" strokeDasharray="2 2" /></Svg>],
  ["正交", true, <Svg s={20}><path d="M3.500 2v15h14" strokeWidth="1.400" /><path d="M3.500 11h6v6" stroke={T} fill="#fff" /></Svg>],
  ["网格", false, <Svg s={20}><path d="M2.500 2.500h15v15h-15zM6.500 2.500v15M10.500 2.500v15M14.500 2.500v15M2.500 6.500h15M2.500 10.500h15M2.500 14.500h15" /></Svg>],
  ["坐标锁定", false, <Svg s={20}><path d="M5 13V4M2.500 6L5 3l2.500 3M5 3h5" stroke={T} strokeWidth="1.600" /><path d="M7 15.500h9" stroke="#f2555a" strokeWidth="2" /><path d="M15 12.500l3.500 3-3.500 3z" fill="#f2555a" stroke="none" /><circle cx="5" cy="15.500" r="2" strokeWidth="1.500" /><path d="M13 6h5v4h-5zM14 6V4c0-1.500 3-1.500 3 0v2" fill={M} stroke={T} /></Svg>],
  ["设置", false, <Svg s={20}><path d="M8.500 2.500h3l.6 2.400 2 1.100 2.400-.7 1.500 2.600-1.800 1.700v1.800l1.800 1.700-1.500 2.600-2.400-.7-2 1.100-.6 2.400h-3l-.6-2.400-2-1.100-2.400.7L2 13.100l1.800-1.700V9.600L2 7.900l1.500-2.600 2.400.7 2-1.100z" fill={M} stroke="#20718a" /><circle cx="10" cy="10.500" r="2.500" fill="#f0f0f0" stroke="#20718a" /></Svg>],
];

function StatusBar() {
  return (
    <footer className="flex h-[27px] shrink-0 items-center bg-[#f0f0f0] pr-2 pb-[2px] pl-[6px]">
      <div className="flex items-center gap-[6px]">
        {statusLeft.map((b, i) =>
          b ? (
            <ToolButton key={i} name={b[0]} active={b[2]} size="h-5 w-5">{b[1]}</ToolButton>
          ) : (
            <div key={i} className="h-[17px] w-px bg-[#cfcfcf]" />
          )
        )}
      </div>
      <button type="button" aria-label="缩小" className="ml-[11px] flex h-4 w-[9px] items-center"><span className="h-[2px] w-full bg-[#a9a9a9]" /></button>
      <input
        type="range"
        aria-label="缩放"
        className="mx-[9px] h-4 w-[62px] appearance-none bg-[linear-gradient(#a9a9a9,#a9a9a9)] bg-[length:100%_1px] bg-center bg-no-repeat [&::-webkit-slider-thumb]:h-[14px] [&::-webkit-slider-thumb]:w-[5px] [&::-webkit-slider-thumb]:appearance-none [&::-webkit-slider-thumb]:border [&::-webkit-slider-thumb]:border-[#a0a0a0] [&::-webkit-slider-thumb]:bg-[#f5f5f5]"
      />
      <button type="button" aria-label="放大比例" className="text-[#a0a0a0]">
        <svg width="9" height="9" viewBox="0 0 9 9"><path d="M4.500 0v9M0 4.500h9" stroke="currentColor" strokeWidth="2" /></svg>
      </button>
      <div className="flex-1 pl-12 text-center font-['Noto_Sans'] text-xs whitespace-pre text-[#444]">1949.81 , 698.50 , 1535.45</div>
      <div className="flex items-center gap-[6px]">
        {statusRight.map((b, i) =>
          b === "chev" ? (
            <svg key={i} width="8" height="5" viewBox="0 0 8 5" fill="none" stroke="#555" className="-mx-1"><path d="M.5 4.500L4 1l3.500 3.500" /></svg>
          ) : (
            <ToolButton key={i} name={b[0]} active={b[1]} size={b[0] === "捕捉" ? "h-5 w-5" : "h-5 w-5"}>{b[2]}</ToolButton>
          )
        )}
      </div>
    </footer>
  );
}

export default function App() {
  return (
    <div className="flex h-screen overflow-hidden bg-white font-['Noto_Sans','Noto_Sans_CJK_SC',sans-serif]">
      <div className="flex min-w-0 flex-1 flex-col">
        <div className="h-2 shrink-0 bg-black" />
        <TitleBar />
        <Tabs />
        <Ribbon />
        <div className="relative flex min-h-0 flex-1">
          <LeftPanel />
          <Viewport />
          <RightPanel />
          <Messages />
          <div className="pointer-events-none absolute -top-[6px] right-px -bottom-[3px] z-20 w-[319px] border-[3px] border-[#fb3737]" />
        </div>
        <CommandBar />
        <StatusBar />
        <div className="flex h-2 shrink-0 border-t border-[#a9a9a9] bg-[linear-gradient(90deg,#d9d9d9_0%,#dcdada_40%,#e0d6d9_50%,#cfe0e8_58%,#d5e0e6_62%,#e2d8dc_70%,#e2dedd_100%)]">
          <div className="mt-[4px] ml-8 h-[3px] w-3 rounded-t-full bg-[#b8342c]" />
          <div className="mt-[4px] ml-[1066px] h-[3px] w-[37px] rounded-t bg-[#ececec]" />
        </div>
      </div>
      <div className="flex w-2 shrink-0 flex-col">
        <div className="h-[52px] border-b border-[#dcdcdc]" />
        <div className="h-14 border-b border-[#e8e8e8]" />
        <div className="h-[45px] border-b border-[#dcdcdc]" />
        <div className="h-[62px] border-b border-[#d0d0d0] bg-[#f4f5f7]" />
        <div className="flex-1 bg-[#f5f6f8]" />
        <div className="h-[33px] border-b border-[#c8c8c8] bg-white" />
        <div className="h-1 bg-[#e2dedd]" />
      </div>
    </div>
  );
}
